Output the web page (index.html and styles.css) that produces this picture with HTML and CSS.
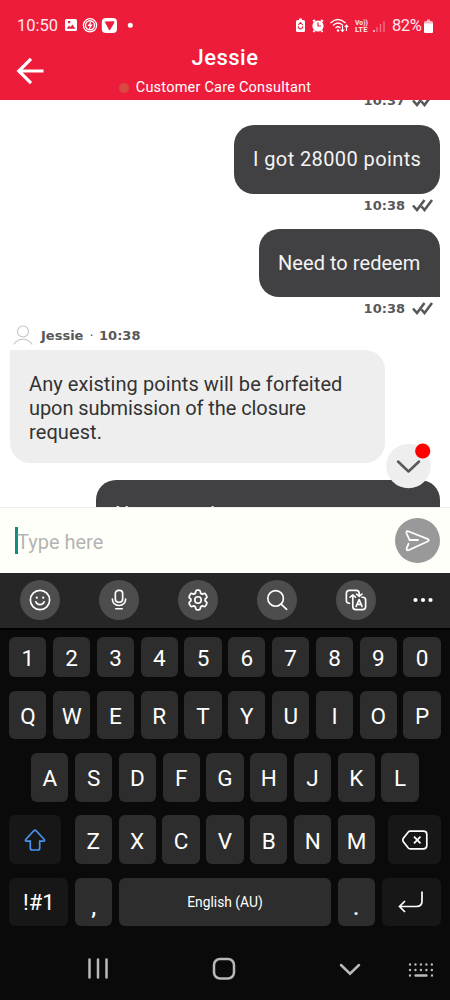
FILE: index.html
```
<!DOCTYPE html>
<html lang="en">
<head>
<meta charset="utf-8">
<title>Customer care chat</title>
<link rel="stylesheet" href="styles.css">
</head>
<body>
<svg class="defs" width="0" height="0"><symbol id="ticks" viewBox="0 0 23 14"><path d="M2 7.500 6 12 13.500 2M10.500 8.500 13.500 12 21 2" fill="none" stroke="currentColor" stroke-width="2.600"/></symbol></svg>
<div class="phone">
  <header class="header">
    <div class="status">
      <span class="clock">10:50</span>
      <svg class="status-left" viewBox="0 0 72 18" width="72" height="18">
        <path fill="#fff" fill-rule="evenodd" d="M1.500 3h9q1.500 0 1.500 1.500v9q0 1.500-1.500 1.500h-9Q0 15 0 13.500v-9Q0 3 1.500 3zM1.700 12.800h8.600L7.500 8.500 5.500 11 4 9.500zM3 5v2.300h2.300V5z"/>
        <circle cx="25" cy="9.300" r="6.600" fill="none" stroke="#fff" stroke-width="1.300"/><circle cx="25" cy="9.300" r="4.500" fill="none" stroke="#fff" stroke-width="1.400"/><path d="m26.500 4.500-4 5.500h2.200l-1.200 4.500 4.300-6h-2.300z" fill="#fff"/>
        <rect x="36.800" y="2" width="15.200" height="15" rx="4" fill="#fff"/><path d="M39.700 5.600 48.500 5.300Q50 5.500 49.300 6.800L45.200 13.800Q44.500 14.800 43.800 13.600z" fill="#ed1c3b"/>
        <circle cx="65.300" cy="9.300" r="2.500" fill="#fff"/>
      </svg>
      <svg class="status-right" viewBox="0 0 92 18" width="92" height="18">
        <path d="M4 4V2.500h3V4h1.500q1.500 0 1.500 1.500v9Q10 16 8.500 16h-6Q1 16 1 14.500v-9Q1 4 2.500 4z" fill="#fff"/><path d="m3.300 9 2.200-2.500L7.700 9M8 10.200 6.800 12.800H4.200L3 10.200" fill="none" stroke="#ed1c3b" stroke-width="1.100"/>
        <circle cx="23" cy="10" r="5.600" fill="#fff"/><path d="M18 5.500 20 4M28 5.500 26 4M19.500 14.500 18.500 16M26.500 14.500 27.500 16" stroke="#fff" stroke-width="2"/><path d="M23 6.500V10h3" fill="none" stroke="#ed1c3b" stroke-width="1.200"/>
        <path d="M35.500 7q7.500-7 15 0M38 9.500q5-4.800 10 0M40.500 12q2.500-2.300 5 0" fill="none" stroke="#fff" stroke-width="1.400"/><circle cx="43" cy="14.500" r="1.200" fill="#fff"/><path d="M47.500 10v5m-1.700-1.500 1.700 2 1.700-2M51.500 15V9.500m-1.700 1.700 1.700-2 1.700 2" fill="none" stroke="#fff" stroke-width="1.100"/>
        <text x="60" y="8.600" class="volte" textLength="13" lengthAdjust="spacingAndGlyphs">Vo))</text><text x="60" y="16" class="volte" textLength="12.500" lengthAdjust="spacingAndGlyphs">LTE</text>
        <path d="M79 16v-2" stroke="#fff" stroke-width="1.300"/><path d="M82 16v-5M85.500 16V8M89 16V5" stroke="#f4738a" stroke-width="1.300"/>
      </svg>
      <span class="battery-text">82%</span>
      <svg class="battery" viewBox="0 0 9 14" width="9" height="14"><path d="M3 2V.5h3V2h1.500Q9 2 9 3.500V12.500Q9 14 7.500 14h-6Q0 14 0 12.500V3.500Q0 2 1.500 2z" fill="#f9b4be"/><path d="M0 4.500h9v8Q9 14 7.500 14h-6Q0 14 0 12.500z" fill="#fff"/></svg>
    </div>
    <div class="title-bar">
      <svg class="back" viewBox="0 0 28 28" width="28" height="28"><path d="M27.500 14H3M15 1.800 2.800 14 15 26.200" fill="none" stroke="#fff" stroke-width="3.200"/></svg>
      <div class="titles"><div class="title">Jessie</div><div class="subtitle"><i class="presence"></i><span>Customer Care Consultant</span></div></div>
    </div>
  </header>
  <main class="chat">
    <div class="meta meta-first"><span>10:37</span><svg class="ticks"><use href="#ticks"/></svg></div>
    <div class="bubble mine points"><span>I got 28000 points</span></div>
    <div class="meta"><span>10:38</span><svg class="ticks"><use href="#ticks"/></svg></div>
    <div class="bubble mine redeem"><span>Need to redeem</span></div>
    <div class="meta meta-second"><span>10:38</span><svg class="ticks"><use href="#ticks"/></svg></div>
    <div class="agent"><svg viewBox="0 0 20 20" width="20" height="20"><circle cx="10" cy="6.500" r="5.500"/><path d="M.7 19.500q3.500-5.300 9.300-5.300t9.300 5.300"/></svg><span class="agent-name">Jessie</span><span class="agent-time"><i>·</i> 10:38</span></div>
    <div class="bubble theirs"><span class="l1">Any existing points will be forfeited</span><br><span class="l2">upon submission of the closure</span><br><span class="l3">request.</span></div>
    <div class="bubble mine last"><span>Not want the concern to matter</span></div>
    <div class="scroll-down"><svg viewBox="0 0 46 46" width="46" height="46"><circle cx="22.500" cy="23" r="22.300" fill="#eee"/><path d="m12 18.500 10.500 10L33 18.500" fill="none" stroke="#58585a" stroke-width="2.500" stroke-linecap="round" stroke-linejoin="round"/><circle cx="36.700" cy="8" r="7.600" fill="#f00"/></svg></div>
  </main>
  <div class="composer">
    <i class="caret"></i><span class="placeholder">Type here</span>
    <div class="send"><svg viewBox="0 0 45 45" width="45" height="45"><path d="M14.500 22 11.600 15.500Q10.700 12.500 13.800 13.500L32.500 20.800Q35 22 32.500 23.500L14 32Q11 33 11.700 30L13.500 25.800M14.500 22H23" fill="none" stroke="#fff" stroke-width="1.800" stroke-linecap="round" stroke-linejoin="round"/></svg></div>
  </div>
  <div class="toolbar">
    <div class="tool"><svg viewBox="0 0 24 24"><circle cx="12" cy="12" r="10.500"/><path d="M7.500 14q1.500 3 4.500 3t4.500-3"/><path class="dots" d="M8.500 9.500h.01M15.500 9.500h.01"/></svg></div>
    <div class="tool"><svg viewBox="0 0 24 24"><rect x="8" y="1.500" width="8" height="13" rx="3.500"/><path d="M4.800 11v.5q.5 6.300 7.200 6.500 6.700-.2 7.200-6.500V11M8.500 21.500h7"/></svg></div>
    <div class="tool"><svg viewBox="0 0 24 24"><circle cx="12" cy="12" r="3.500"/><path transform="translate(-.8 -.8) scale(1.067)" d="M9.600 3.600Q10 2 11.200 2h1.600Q14 2 14.400 3.600L14.800 5.200 16.300 6 18 5.400Q19.200 5 19.900 6.200L20.900 8Q21.500 9.200 20.500 10L19.300 11.200V12.800L20.500 14Q21.500 14.800 20.900 16L19.900 17.800Q19.200 19 18 18.600L16.300 18 14.800 18.800 14.400 20.400Q14 22 12.800 22H11.200Q10 22 9.600 20.400L9.200 18.800 7.700 18 6 18.600Q4.800 19 4.100 17.800L3.100 16Q2.500 14.800 3.500 14L4.700 12.800V11.200L3.500 10Q2.500 9.200 3.100 8L4.100 6.200Q4.800 5 6 5.400L7.700 6 9.200 5.200z"/></svg></div>
    <div class="tool"><svg viewBox="0 0 24 24"><circle cx="10.500" cy="10.300" r="8.500"/><path d="m16.500 16.500 6 5.800"/></svg></div>
    <div class="tool"><svg viewBox="0 0 24 24"><path d="M5 15.500H4.500Q1.500 15.500 1.500 12.500V5Q1.500 1.500 5 1.500H12Q15.500 1.500 15.500 5V8M12.500 5.500 15.500 8 18.500 5.500M5.500 9 8.500 6.300 11.500 9M8.500 7V19Q8.500 22.500 12 22.500H19Q22.500 22.500 22.500 19V12Q22.500 9 19.500 9H18.500"/><path d="m12.200 19 3.200-7.500 3.200 7.500M13.200 16.700h4.500"/></svg></div>
    <svg class="more" viewBox="0 0 20 6" width="20" height="6"><circle cx="2.500" cy="3" r="2.100"/><circle cx="10" cy="3" r="2.100"/><circle cx="17.500" cy="3" r="2.100"/></svg>
  </div>
  <div class="keyboard">
    <div class="row numbers"><b>1</b><b>2</b><b>3</b><b>4</b><b>5</b><b>6</b><b>7</b><b>8</b><b>9</b><b>0</b></div>
    <div class="row"><b>Q</b><b>W</b><b>E</b><b>R</b><b>T</b><b>Y</b><b>U</b><b>I</b><b>O</b><b>P</b></div>
    <div class="row home"><b>A</b><b>S</b><b>D</b><b>F</b><b>G</b><b>H</b><b>J</b><b>K</b><b>L</b></div>
    <div class="row"><b class="dark shift"><svg viewBox="0 0 22 22" width="22" height="22"><path d="M9.800 1.800Q11 .7 12.200 1.800L20 10.300Q21.300 12 19.300 12.200H15.700V19Q15.700 21 13.700 21H8.300Q6.300 21 6.300 19V12.200H2.700Q.7 12 2 10.300z" fill="none" stroke="#4b92ef" stroke-width="1.700"/></svg></b><b>Z</b><b>X</b><b>C</b><b>V</b><b>B</b><b>N</b><b>M</b><b class="dark erase"><svg viewBox="0 0 26 20" width="26" height="20"><path d="M8 1.200H21.500Q24.800 1.200 24.800 4.500V15.500Q24.800 18.800 21.500 18.800H8Q7 18.800 6.300 18L1.200 11.500Q.5 10 1.200 8.500L6.300 2Q7 1.200 8 1.200zM12 6.700l6.500 6.600M18.500 6.700 12 13.300" fill="none" stroke="#fff" stroke-width="1.700"/></svg></b></div>
    <div class="row"><b class="dark wide symbols">!#1</b><b class="punct">,</b><b class="space">English (AU)</b><b class="punct">.</b><b class="dark wide"><svg viewBox="0 0 26 22" width="26" height="22"><path d="M24 .5V10Q24 15.500 18.500 15.500H2M7 10 1.500 15.500 7 21" fill="none" stroke="#fff" stroke-width="1.700"/></svg></b></div>
  </div>
  <nav class="nav">
    <svg viewBox="0 0 450 40" width="450" height="40" fill="none" stroke="#b9b9b9" stroke-linecap="round"><path d="M89.500 9.500v18M98 9.500v18M106.500 9.500v18" stroke-width="2.500"/><rect x="214" y="9" width="20" height="19.500" rx="6" stroke-width="2.500"/><path d="m341 15 9 8.700 9-8.700" stroke-width="2.500"/><path d="M410 14.500h23M410 20h23" stroke-width="2.400" stroke-dasharray=".01 5.450"/><path d="M410 25.500h.01M415.500 25.500h11M432 25.500h.01" stroke-width="2.400"/></svg>
  </nav>
</div>
</body>
</html>
```
FILE: styles.css
```
* { box-sizing: border-box; }
body { margin: 0; background: #0a0a0a; font-family: Roboto, sans-serif; }
svg { display: block; flex: none; }
.defs { position: absolute; }
.phone { width: 450px; height: 1000px; overflow: hidden; display: flex; flex-direction: column; }
.header { height: 100px; flex: none; background: #ed1c3b; color: #fff; }
.status { height: 43px; padding: 16px 16px 0 17px; display: flex; align-items: flex-start; }
.clock, .battery-text { font-size: 16.500px; line-height: 19px; font-weight: 400; color: #ffe9ed; }
.clock { width: 48px; }
.status-right { margin-left: 158px; }
.battery-text { margin-left: 5px; width: 32px; letter-spacing: -.4px; }
.battery { margin-top: 3px; }
.volte { font: bold 8px Roboto, sans-serif; fill: #ffe9ed; }
.title-bar { display: grid; grid-template-columns: 28px 1fr 28px; padding: 0 16px; }
.back { margin-top: 14px; }
.titles { text-align: center; }
.title { font: 500 22px/28px Roboto, sans-serif; letter-spacing: .5px; padding-top: 1px; }
.subtitle { display: flex; align-items: center; justify-content: center; gap: 7px; font-size: 14.500px; line-height: 20px; margin: 6px 0 0 -20px; letter-spacing: .22px; padding-left: 0; }
.subtitle span { white-space: nowrap; }
.presence { width: 10px; height: 10px; border-radius: 50%; background: #d9493f; }
.chat { position: relative; height: 408px; flex: none; overflow: hidden; background: #fff; display: flex; flex-direction: column; align-items: flex-end; padding: 0 10px; border-bottom: 1px solid #eee; }
.meta { height: 35px; flex: none; display: flex; align-items: flex-start; gap: 6px; padding: 3px 6px 0 0; color: #58585a; font: bold 13px/17px "DejaVu Sans", sans-serif; }
.meta-first { height: 35px; margin-top: -10px; padding-top: 2px; }
.meta-second { height: 28px; }
.ticks { width: 23px; height: 14px; margin-top: 1px; }
.bubble { flex: none; font-size: 20px; line-height: 24px; border-radius: 20px; }
.mine { height: 68.500px; padding: 22px 19px; background: #414042; color: #f4f4f4; font-weight: 400; white-space: nowrap; }
.points { width: 206px; letter-spacing: .4px; }
.redeem { width: 181px; border-bottom-right-radius: 0; letter-spacing: .05px; }
.last { width: 344px; margin-top: 17.500px; padding-top: 22px; letter-spacing: .3px; }
.agent { align-self: flex-start; height: 25px; flex: none; display: flex; gap: 8px; padding-left: 3px; color: #58585a; font: bold 13px/22px "DejaVu Sans", sans-serif; }
.agent svg { fill: none; stroke: #c4c4c4; stroke-width: 1.100; }
.agent-time { margin-left: -2px; }
.agent-time i { font-style: normal; font-weight: 400; margin-right: 1px; }
.theirs { align-self: flex-start; width: 375px; height: 112.500px; padding: 22px 19px; background: #eee; color: #333; border-top-left-radius: 0; white-space: nowrap; }
.l1 { letter-spacing: .08px; }
.l2 { letter-spacing: -.08px; }
.l3 { letter-spacing: .1px; }
.scroll-down { position: absolute; left: 386px; top: 343px; }
.composer { height: 64.500px; flex: none; display: flex; align-items: center; padding: 0 10px 0 15px; background: #fffffa; }
.caret { width: 3px; height: 27px; background: #128d80; }
.placeholder { margin: 3px auto 0 -1px; font-size: 20px; color: #b4b4b4; letter-spacing: 0; }
.send { width: 45px; height: 45px; border-radius: 50%; background: #999; }
.toolbar { height: 55.500px; flex: none; background: #262626; display: flex; align-items: center; gap: 39.200px; padding: 0 17px 1px 19.500px; }
.tool { width: 40px; height: 40px; flex: none; border-radius: 50%; background: #4d4d4d; display: grid; place-items: center; }
.tool svg { width: 22px; height: 22px; fill: none; stroke: #fff; stroke-width: 1.800; stroke-linecap: round; stroke-linejoin: round; }
.tool .dots { stroke-width: 2.400; }
.more { fill: #fff; margin-left: -2.500px; }
.keyboard { flex: none; height: 311px; border-top: 2px solid #000; padding: 7px 9.300px 0; display: flex; flex-direction: column; gap: 13.700px; }
.row { height: 48.600px; display: flex; gap: 6.550px; justify-content: space-between; }
.numbers { height: 40px; }
.home { padding: 0 22px; }
.row b { width: 37.200px; height: 100%; flex: none; border-radius: 6px; background: #2d2d2d; color: #fff; display: grid; place-items: center; font-weight: 400; font-size: 22.500px; line-height: 27px; padding-top: 3px; }
.numbers b { padding-top: 2px; }
.row .dark { background: #171717; }
.row .shift, .row .erase { width: 52.200px; padding: 0; }
.row .shift { margin-right: 6.500px; }
.row .erase { margin-left: 6.500px; }
.row .wide { width: 59px; padding-top: 0; }
.row .symbols { font-size: 22px; padding-top: 1px; }
.row .space { width: 211.500px; font-size: 13.800px; padding-top: 2px; }
.row .punct { padding-top: 12px; font-weight: 500; }
.nav { margin-top: 11px; height: 40px; flex: none; }
```
